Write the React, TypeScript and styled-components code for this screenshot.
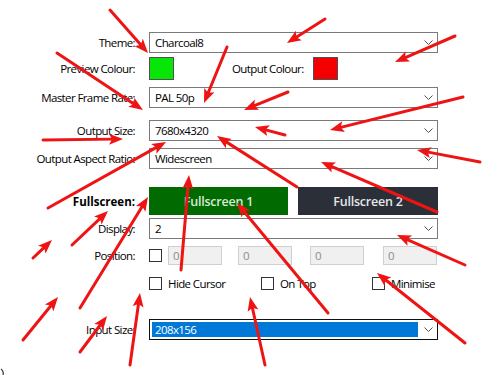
import React from "react";
import styled, { createGlobalStyle } from "styled-components";

const GlobalStyle = createGlobalStyle`
  html, body {
    margin: 0;
    padding: 0;
    background: #fff;
  }
`;

const Window = styled.div`
  position: relative;
  width: 502px;
  height: 375px;
  overflow: hidden;
  background: #fff;
  color: #000;
  font-family: "Open Sans", "Liberation Sans", sans-serif;
  font-size: 11.5px;
  letter-spacing: -0.6px;
`;

const Form = styled.div`
  display: flex;
  flex-direction: column;
  padding-top: 32px;
`;

const Row = styled.div<{ $top: number; $h: number }>`
  display: grid;
  grid-template-columns: 135px 289px;
  column-gap: 14px;
  align-items: center;
  height: ${(p) => p.$h}px;
  margin-top: ${(p) => p.$top}px;
`;

const Label = styled.div<{ $bold?: boolean }>`
  text-align: right;
  white-space: nowrap;
  font-weight: ${(p) => (p.$bold ? 700 : 400)};
  font-size: ${(p) => (p.$bold ? "11.5px" : "11.5px")};
  letter-spacing: ${(p) => (p.$bold ? "0" : "-0.6px")};
`;

const Combo = styled.div<{ $focused?: boolean }>`
  display: flex;
  align-items: center;
  box-sizing: border-box;
  height: 21px;
  padding: 2px 4px 2px 2px;
  border: 1px solid ${(p) => (p.$focused ? "#111" : "#7a7a7a")};
  background: #fff;
`;

const ComboText = styled.div<{ $selected?: boolean }>`
  flex: 1;
  align-self: stretch;
  display: flex;
  align-items: center;
  padding-left: 3px;
  background: ${(p) => (p.$selected ? "#0078d7" : "transparent")};
  color: ${(p) => (p.$selected ? "#fff" : "#000")};
  white-space: nowrap;
`;

const ChevronSvg = styled.svg`
  flex: none;
  margin-left: 6px;
  width: 9px;
  height: 5px;
`;

const ColourRow = styled.div`
  display: grid;
  grid-template-columns: 83px 81px 25px;
  align-items: center;
  height: 23px;
`;

const Swatch = styled.div<{ $colour: string }>`
  box-sizing: border-box;
  width: 25px;
  height: 23px;
  border: 1px solid #505050;
  background: ${(p) => p.$colour};
`;

const InlineLabel = styled.div`
  white-space: nowrap;
`;

const ModeButtons = styled.div`
  display: grid;
  grid-template-columns: 139px 140px;
  column-gap: 10px;
  height: 28px;
`;

const ModeButton = styled.div<{ $active?: boolean }>`
  display: flex;
  align-items: center;
  justify-content: center;
  background: ${(p) => (p.$active ? "#016b02" : "#2b2f38")};
  color: ${(p) => (p.$active ? "#d8ead8" : "#e6e7ea")};
  font-size: 12.5px;
  font-weight: 600;
  letter-spacing: -0.2px;
`;

const PositionRow = styled.div`
  display: grid;
  grid-template-columns: 19px 70px 72px 73px 54px;
  align-items: center;
  height: 19px;
`;

const Check = styled.div`
  box-sizing: border-box;
  width: 13px;
  height: 13px;
  border: 1px solid #333;
  background: #fff;
`;

const NumberBox = styled.div`
  box-sizing: border-box;
  width: 54px;
  height: 19px;
  display: flex;
  align-items: center;
  padding-left: 4px;
  border: 1px solid #cfcfcf;
  background: #f0f0f0;
  color: #8c8c8c;
`;

const OptionRow = styled.div`
  display: grid;
  grid-template-columns: 112px 111px auto;
  align-items: center;
  height: 13px;
`;

const Option = styled.label`
  display: flex;
  align-items: center;
  gap: 6px;
  white-space: nowrap;
`;

const Overlay = styled.svg`
  position: absolute;
  left: 0;
  top: 0;
  width: 502px;
  height: 375px;
  pointer-events: none;
`;

const Chevron = () => (
  <ChevronSvg viewBox="0 0 9 5">
    <path d="M0.5 0.5 L4.5 4.5 L8.5 0.5" fill="none" stroke="#505050" strokeWidth="1" />
  </ChevronSvg>
);

const ComboBox = ({ value, focused }: { value: string; focused?: boolean }) => (
  <Combo $focused={focused}>
    <ComboText $selected={focused}>{value}</ComboText>
    <Chevron />
  </Combo>
);

// tail -> head, head is where the arrow points
const arrows: [number, number, number, number][] = [
  [110, 10, 148, 53],
  [325, 19, 287, 43],
  [227, 47, 204, 103],
  [57, 53, 143, 110],
  [455, 36, 395, 62],
  [288, 92, 244, 110],
  [463, 97, 330, 130],
  [43, 140, 123, 139],
  [297, 187, 217, 136],
  [285, 135, 255, 127],
  [480, 162, 417, 150],
  [437, 212, 321, 162],
  [48, 208, 166, 142],
  [181, 270, 189, 175],
  [72, 245, 108, 211],
  [33, 258, 52, 240],
  [80, 308, 148, 197],
  [328, 313, 237, 203],
  [465, 265, 397, 235],
  [23, 340, 58, 297],
  [80, 352, 107, 316],
  [130, 365, 140, 293],
  [265, 365, 250, 297],
  [465, 343, 377, 273],
];

const Arrow = ({ x1, y1, x2, y2 }: { x1: number; y1: number; x2: number; y2: number }) => {
  const dx = x2 - x1;
  const dy = y2 - y1;
  const len = Math.hypot(dx, dy);
  const ux = dx / len;
  const uy = dy / len;
  const headLen = 14;
  const headHalf = 5.5;
  const bx = x2 - ux * headLen;
  const by = y2 - uy * headLen;
  const pts = [
    `${x2},${y2}`,
    `${bx - uy * headHalf},${by + ux * headHalf}`,
    `${bx + ux * 3},${by + uy * 3}`,
    `${bx + uy * headHalf},${by - ux * headHalf}`,
  ].join(" ");
  return (
    <g>
      <line x1={x1} y1={y1} x2={bx + ux * 4} y2={by + uy * 4} stroke="#ee1414" strokeWidth="3" strokeLinecap="round" />
      <polygon points={pts} fill="#ee1414" />
    </g>
  );
};

export default function App() {
  return (
    <Window>
      <GlobalStyle />
      <Form>
        <Row $top={0} $h={21}>
          <Label>Theme:</Label>
          <ComboBox value="Charcoal8" />
        </Row>
        <Row $top={4} $h={23}>
          <Label>Preview Colour:</Label>
          <ColourRow>
            <Swatch $colour="#08e608" />
            <InlineLabel>Output Colour:</InlineLabel>
            <Swatch $colour="#f40000" />
          </ColourRow>
        </Row>
        <Row $top={7} $h={21}>
          <Label>Master Frame Rate:</Label>
          <ComboBox value="PAL 50p" />
        </Row>
        <Row $top={12} $h={21}>
          <Label>Output Size:</Label>
          <ComboBox value="7680x4320" />
        </Row>
        <Row $top={7} $h={21}>
          <Label>Output Aspect Ratio:</Label>
          <ComboBox value="Widescreen" />
        </Row>
        <Row $top={18} $h={28}>
          <Label $bold>Fullscreen:</Label>
          <ModeButtons>
            <ModeButton $active>Fullscreen 1</ModeButton>
            <ModeButton>Fullscreen 2</ModeButton>
          </ModeButtons>
        </Row>
        <Row $top={3} $h={21}>
          <Label>Display:</Label>
          <ComboBox value="2" />
        </Row>
        <Row $top={7} $h={19}>
          <Label>Position:</Label>
          <PositionRow>
            <Check />
            <NumberBox>0</NumberBox>
            <NumberBox>0</NumberBox>
            <NumberBox>0</NumberBox>
            <NumberBox>0</NumberBox>
          </PositionRow>
        </Row>
        <Row $top={11} $h={13}>
          <span />
          <OptionRow>
            <Option>
              <Check />
              Hide Cursor
            </Option>
            <Option>
              <Check />
              On Top
            </Option>
            <Option>
              <Check />
              Minimise
            </Option>
          </OptionRow>
        </Row>
        <Row $top={30} $h={21}>
          <Label>Input Size:</Label>
          <ComboBox value="208x156" focused />
        </Row>
      </Form>
      <Overlay viewBox="0 0 502 375">
        {arrows.map(([x1, y1, x2, y2], i) => (
          <Arrow key={i} x1={x1} y1={y1} x2={x2} y2={y2} />
        ))}
        <path d="M1 369 Q4 371 3 375" fill="none" stroke="#333" strokeWidth="1.2" />
      </Overlay>
    </Window>
  );
}
